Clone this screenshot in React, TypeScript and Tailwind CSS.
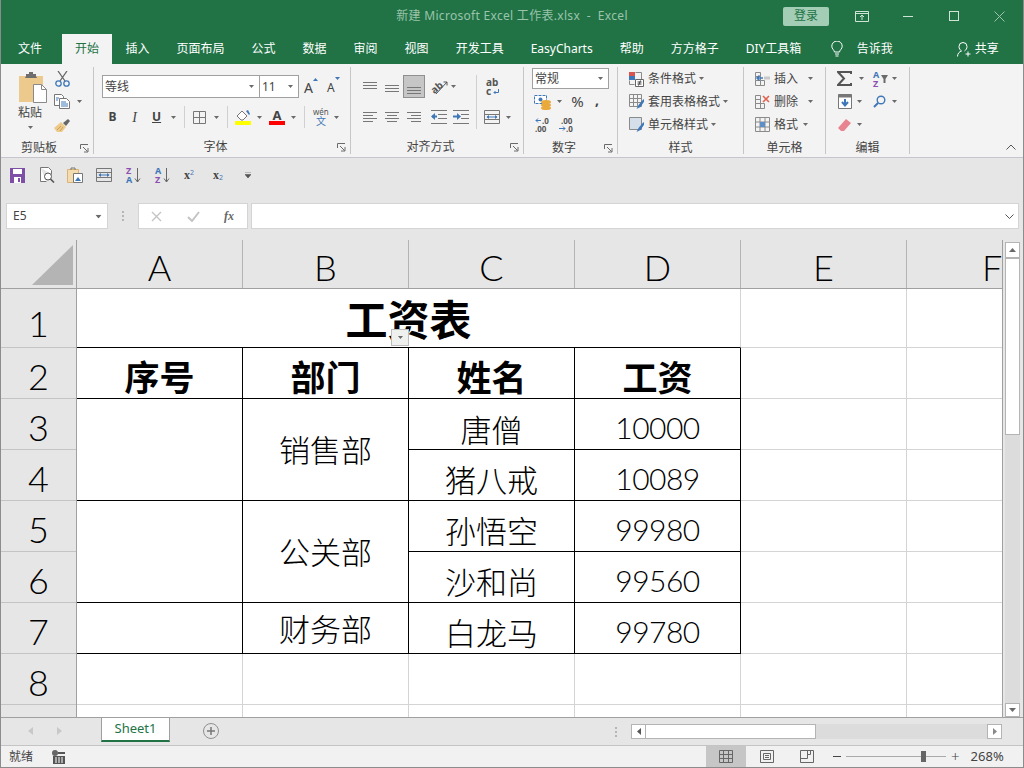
const Caret = ({ className = '' }: { className?: string }) => (
  <svg width="5" height="3" viewBox="0 0 5 3" className={`shrink-0 ${className}`}>
    <path d="M0 0h5L2.500 3z" fill="#6a6a6a" />
  </svg>
);

const Launcher = () => (
  <svg width="9" height="9" viewBox="0 0 9 9" className="shrink-0 mr-[4px] mt-[3px]">
    <path d="M.5 5V.5H8M3 3l4.500 4.500M8 4v4H4" fill="none" stroke="#6a6a6a" />
  </svg>
);

const Sep = ({ className = '' }: { className?: string }) => <div className={`w-px shrink-0 h-[22px] bg-[#d0d0d0] ${className}`} />;

function Lines({ rows, w = 14 }: { rows: [number, number, number][]; w?: number }) {
  return (
    <svg width={w} height="16" viewBox={`0 0 ${w} 16`} className="shrink-0">
      {rows.map(([x, y, l], i) => (
        <path key={i} d={`M${x} ${y + 0.5}h${l}`} stroke="#777" />
      ))}
    </svg>
  );
}

const SheetGridIcon = () => (
  <svg width="15" height="15" viewBox="0 0 15 15" className="shrink-0">
    <path d="M.5.500h14v14H.5zM.5 5h14M.5 10h14M5 .5v14M10 .5v14" fill="none" stroke="#8a8a8a" />
    <path d="M5 5h5v5H5z" fill="#5b8fc9" />
  </svg>
);

const Wrap = () => (
  <svg width="16" height="14" viewBox="0 0 16 14" className="shrink-0">
    <path d="M.5.500h15v13H.5zM.5 4.500h15M.5 9.500h15" fill="none" stroke="#777" />
    <path d="M3 7h10" stroke="#3f78b8" />
    <path d="M5 5v4L2.500 7zM11 5v4l2.500-2z" fill="#3f78b8" />
  </svg>
);

const SortIcon = ({ top, bottom, c1, c2 }: { top: string; bottom: string; c1: string; c2: string }) => (
  <svg width="15" height="16" viewBox="0 0 15 16" className="shrink-0 overflow-visible font-bold text-[9px]">
    <text x="0" y="7" fill={c1}>{top}</text>
    <text x="0" y="15.500" fill={c2}>{bottom}</text>
    <path d="M11.500 1v14M9 11.500l2.500 3.500 2.500-3.500" fill="none" stroke="#666" />
  </svg>
);

function Cell({ className = '', children }: { className?: string; children?: React.ReactNode }) {
  return <div className={`flex items-center justify-center border-r border-b ${className}`}>{children}</div>;
}

const rowNums: [string, string][] = [
  ['1', 'h-[59px] pt-[10px]'],
  ['2', 'h-[51px] pt-[5px]'],
  ['3', 'h-[51px] pt-[5px]'],
  ['4', 'h-[51px] pt-[5px]'],
  ['5', 'h-[51px] pt-[5px]'],
  ['6', 'h-[51px] pt-[5px]'],
  ['7', 'h-[51px] pt-[5px]'],
  ['8', 'h-[51px] pt-[5px]'],
];

const tabs = ['插入', '页面布局', '公式', '数据', '审阅', '视图', '开发工具', 'EasyCharts', '帮助', '方方格子', 'DIY工具箱'];

export default function App() {
  return (
    <div className="w-[1024px] h-[768px] overflow-hidden flex flex-col border-x border-b border-[#8c8c8c] bg-[#e6e6e6] text-[12px] text-[#444] font-['Noto_Sans','Noto_Sans_CJK_SC',sans-serif]">
      {/* title bar */}
      <div className="h-[32px] shrink-0 bg-[#217346] grid grid-cols-[1fr_auto_1fr] items-center">
        <div />
        <div className="text-[#9ac4ab] text-[12px] tracking-[0.3px] whitespace-pre">新建 Microsoft Excel 工作表.xlsx  -  Excel</div>
        <div className="flex items-center justify-end pr-[18px]">
          <div className="w-[46px] h-[19px] rounded-[2px] bg-[#a3cdb5] text-[#217346] flex items-center justify-center">登录</div>
          <svg width="14" height="11" viewBox="0 0 14 11" className="ml-[26px]">
            <path d="M.5.500h13v10H.5zM.5 2.500h13M7 9V4.500M5 6l2-2 2 2" fill="none" stroke="#cfe3d7" />
          </svg>
          <div className="ml-[34px] w-[10px] h-px bg-[#cfe3d7]" />
          <div className="ml-[36px] w-[10px] h-[10px] border border-[#cfe3d7]" />
          <svg width="11" height="11" viewBox="0 0 11 11" className="ml-[35px]">
            <path d="M.5.500l10 10M10.500.500l-10 10" stroke="#9ac4ab" />
          </svg>
        </div>
      </div>

      {/* tabs */}
      <div className="h-[32px] shrink-0 bg-[#217346] flex items-end pl-[4px] text-white">
        <div className="h-[30px] px-[13px] mr-[7px] flex items-center">文件</div>
        <div className="h-[30px] px-[13px] flex items-center bg-[#f3f3f3] text-[#217346]">开始</div>
        {tabs.map((t) => (
          <div key={t} className="h-[30px] px-[13.500px] flex items-center whitespace-nowrap">{t}</div>
        ))}
        <div className="h-[30px] flex items-center ml-[16px]">
          <svg width="12" height="16" viewBox="0 0 12 16">
            <path d="M3.500 11C3 8.500.8 8 .8 5.200a5.200 5.200 0 0 1 10.400 0C11.200 8 9 8.500 8.500 11zM4 13h4M4.500 15h3" fill="none" stroke="#fff" />
          </svg>
          <span className="ml-[14px]">告诉我</span>
        </div>
        <div className="h-[30px] flex items-center ml-[64px]">
          <svg width="15" height="16" viewBox="0 0 15 16">
            <path d="M.5 15.500c0-3 2-5 4-5.500-1.500-1-2.500-2.500-2.500-4.500a4 4 0 0 1 8 0c0 2-1 3.500-2.500 4.500M11 10.500v5M8.500 13h5" fill="none" stroke="#fff" />
          </svg>
          <span className="ml-[3px]">共享</span>
        </div>
      </div>

      {/* ribbon */}
      <div className="h-[94px] shrink-0 bg-[#f3f3f3] border-b border-[#c8c4cc] flex pt-[3px]">
        {/* clipboard */}
        <div className="w-[93px] h-[87px] shrink-0 border-r border-[#c6c6c6] flex flex-col">
          <div className="h-[69px] flex">
            <div className="w-[50px] pl-[17px] pt-[5px] flex flex-col items-start">
              <svg width="29" height="31" viewBox="0 0 29 31">
                <path d="M1 4h24v26H1z" fill="#ecc98c" />
                <path d="M8 4V2h3V0h4v2h3v2l1 2H7z" fill="#6e6e6e" />
                <path d="M15.500 12.500h8l5 5v13h-13z" fill="#fff" stroke="#8a8a8a" />
                <path d="M23.500 12.500v5h5" fill="none" stroke="#8a8a8a" />
              </svg>
              <span className="mt-[1px] leading-[17px]">粘贴</span>
              <Caret className="ml-[10px] mt-[5px]" />
            </div>
            <div className="flex flex-col">
              <div className="h-[23px] flex items-center pl-[4px]">
                <svg width="15" height="16" viewBox="0 0 15 16">
                  <path d="M3 0l7 10M12 0L5 10" stroke="#666" strokeWidth="1.300" />
                  <circle cx="3.500" cy="12.500" r="2.700" fill="none" stroke="#3f78b8" strokeWidth="1.300" />
                  <circle cx="11.500" cy="12.500" r="2.700" fill="none" stroke="#3f78b8" strokeWidth="1.300" />
                </svg>
              </div>
              <div className="h-[23px] flex items-center pl-[3px]">
                <svg width="16" height="15" viewBox="0 0 16 15">
                  <path d="M.5.500h7l2 2v9h-9z" fill="#fff" stroke="#777" />
                  <path d="M5.500 4.500h7l3 3v7h-10z" fill="#fff" stroke="#777" />
                  <path d="M7 8h5M7 10h7M7 12h7M2 4h3M2 6h2" stroke="#3f78b8" />
                </svg>
                <Caret className="ml-[7px]" />
              </div>
              <div className="h-[23px] flex items-center pl-[3px]">
                <svg width="16" height="14" viewBox="0 0 16 14">
                  <path d="M9 5l5-4 2 2-4 5z" fill="#666" />
                  <path d="M0 10l7-6 5 5-4 5H3z" fill="#edc98a" />
                  <path d="M3 12l4-4M6 13l3-4" stroke="#c9a263" />
                </svg>
              </div>
            </div>
          </div>
          <div className="flex flex-1 pt-[5px] leading-[14px]">
            <div className="flex-1 text-center pr-[3px]">剪贴板</div>
            <Launcher />
          </div>
        </div>

        {/* font */}
        <div className="w-[257px] h-[87px] shrink-0 border-r border-[#c6c6c6] flex flex-col">
          <div className="h-[69px] flex flex-col pt-[8px]">
            <div className="h-[23px] flex items-center">
              <div className="ml-[8px] w-[158px] h-[23px] bg-white border border-[#a0a0a0] flex items-center justify-between pl-[2px] pr-[5px]">
                <span>等线</span>
                <Caret />
              </div>
              <div className="-ml-px w-[40px] h-[23px] bg-white border border-[#a0a0a0] flex items-center justify-between pl-[2px] pr-[5px]">
                <span>11</span>
                <Caret />
              </div>
              <div className="ml-[5px] flex items-start w-[14px]">
                <span className="text-[14px] leading-[18px] mt-[2px]">A</span>
                <svg width="5" height="3" viewBox="0 0 5 3" className="mt-[1px]"><path d="M0 3h5L2.500 0z" fill="#3f78b8" /></svg>
              </div>
              <div className="ml-[9px] flex items-start w-[13px]">
                <span className="text-[12px] leading-[18px] mt-[3px]">A</span>
                <svg width="5" height="3" viewBox="0 0 5 3" className="mt-[1px]"><path d="M0 0h5L2.500 3z" fill="#3f78b8" /></svg>
              </div>
            </div>
            <div className="h-[22px] mt-[8px] flex items-center">
              <span className="ml-[14px] w-[9px] font-bold text-center">B</span>
              <span className="ml-[14px] w-[7px] italic text-center font-['Liberation_Serif',serif] text-[14px]">I</span>
              <span className="ml-[14px] w-[9px] font-bold text-center underline">U</span>
              <Caret className="ml-[10px]" />
              <Sep className="ml-[8px]" />
              <svg width="13" height="13" viewBox="0 0 13 13" className="ml-[8px]">
                <path d="M.5.500h12v12H.5zM6.500 0v13M0 6.500h13" fill="none" stroke="#777" />
              </svg>
              <Caret className="ml-[8px]" />
              <Sep className="ml-[8px]" />
              <div className="ml-[7px] w-[16px] flex flex-col">
                <svg width="16" height="11" viewBox="0 0 16 11">
                  <path d="M2 6l5-5 5 5-4 4H6z" fill="#fff" stroke="#777" />
                  <path d="M11 1l3 4 1-1-2-4z" fill="#3f78b8" />
                </svg>
                <div className="h-[4px] bg-[#ffff00]" />
              </div>
              <Caret className="ml-[6px]" />
              <div className="ml-[7px] w-[16px] flex flex-col items-center">
                <span className="leading-[11px] font-bold text-[13px]">A</span>
                <div className="h-[4px] w-full bg-[#ff0000]" />
              </div>
              <Caret className="ml-[6px]" />
              <Sep className="ml-[8px]" />
              <svg width="15" height="18" viewBox="0 0 15 18" className="ml-[8px] overflow-visible text-[8px]">
                <text x="0" y="7" fill="#555">wén</text>
                <text x="3" y="17" fill="#3f78b8" className="text-[10px]">文</text>
              </svg>
              <Caret className="ml-[6px]" />
            </div>
          </div>
          <div className="flex flex-1 pt-[5px] leading-[14px]">
            <div className="flex-1 text-center">字体</div>
            <Launcher />
          </div>
        </div>

        {/* alignment */}
        <div className="w-[173px] h-[87px] shrink-0 border-r border-[#c6c6c6] flex flex-col">
          <div className="h-[69px] flex pt-[8px]">
            <div className="flex flex-col w-[125px] shrink-0">
              <div className="h-[23px] flex items-center">
                <div className="ml-[12px]"><Lines rows={[[0, 3, 14], [0, 6, 14], [0, 9, 14]]} /></div>
                <div className="ml-[8px]"><Lines rows={[[0, 6, 14], [0, 9, 14], [0, 12, 14]]} /></div>
                <div className="ml-[4px] w-[22px] h-[23px] bg-[#c6c6c6] border border-[#8f8f8f] flex items-center justify-center">
                  <Lines rows={[[0, 8, 14], [0, 11, 14], [0, 14, 14]]} />
                </div>
                <svg width="17" height="17" viewBox="0 0 17 17" className="ml-[6px] overflow-visible text-[10px] font-bold">
                  <text x="0" y="13" fill="#555" transform="rotate(-40 6 10)">ab</text>
                  <path d="M5 16L16 4M12.500 4H16v3.500" fill="none" stroke="#555" />
                </svg>
                <Caret className="ml-[3px]" />
              </div>
              <div className="h-[22px] mt-[8px] flex items-center">
                <div className="ml-[12px]"><Lines rows={[[0, 3, 14], [0, 6, 10], [0, 9, 14], [0, 12, 10]]} /></div>
                <div className="ml-[8px]"><Lines rows={[[0, 3, 14], [2, 6, 10], [0, 9, 14], [2, 12, 10]]} /></div>
                <div className="ml-[8px]"><Lines rows={[[0, 3, 14], [4, 6, 10], [0, 9, 14], [4, 12, 10]]} /></div>
                <svg width="16" height="14" viewBox="0 0 16 14" className="ml-[10px]">
                  <path d="M0 .500h16M7 4.500h9M7 8.500h9M0 13.500h16" stroke="#777" />
                  <path d="M1 6.500h5" stroke="#3f78b8" strokeWidth="2" />
                  <path d="M4 3v7L0 6.500z" fill="#3f78b8" />
                </svg>
                <svg width="16" height="14" viewBox="0 0 16 14" className="ml-[6px]">
                  <path d="M0 .500h16M8 4.500h8M8 8.500h8M0 13.500h16" stroke="#777" />
                  <path d="M0 6.500h5" stroke="#3f78b8" strokeWidth="2" />
                  <path d="M4 3v7l4-3.500z" fill="#3f78b8" />
                </svg>
              </div>
            </div>
            <div className="w-px h-[54px] bg-[#d0d0d0] shrink-0" />
            <div className="flex flex-col">
              <svg width="14" height="18" viewBox="0 0 14 18" className="ml-[9px] mt-[3px] mb-[2px] overflow-visible text-[10px] font-bold">
                <text x="0" y="8" fill="#555">ab</text>
                <text x="0" y="16.500" fill="#555">c</text>
                <path d="M12.500 11v3.500H8M9.500 13L8 14.500 9.500 16" fill="none" stroke="#3f78b8" />
              </svg>
              <div className="h-[22px] mt-[8px] flex items-center ml-[7px]">
                <Wrap />
                <Caret className="ml-[6px]" />
              </div>
            </div>
          </div>
          <div className="flex flex-1 pt-[5px] leading-[14px]">
            <div className="flex-1 text-center">对齐方式</div>
            <Launcher />
          </div>
        </div>

        {/* number */}
        <div className="w-[94px] h-[87px] shrink-0 border-r border-[#c6c6c6] flex flex-col">
          <div className="h-[69px] flex flex-col">
            <div className="h-[23px] flex items-center">
              <div className="ml-[8px] w-[77px] h-[21px] bg-white border border-[#a0a0a0] flex items-center justify-between pl-[2px] pr-[5px]">
                <span>常规</span>
                <Caret />
              </div>
            </div>
            <div className="h-[23px] flex items-center">
              <svg width="18" height="16" viewBox="0 0 18 16" className="ml-[10px]">
                <path d="M.5 1.500h12v8H.5z" fill="#fff" stroke="#3f78b8" strokeDasharray="3 1" />
                <circle cx="6.500" cy="5.500" r="2" fill="#3f78b8" />
                <ellipse cx="12" cy="8" rx="5" ry="2" fill="#e9a93b" />
                <ellipse cx="12" cy="11" rx="5" ry="2" fill="#e9a93b" />
                <ellipse cx="12" cy="14" rx="5" ry="2" fill="#e9a93b" />
              </svg>
              <Caret className="ml-[5px]" />
              <span className="ml-[9px] text-[15px] w-[13px] text-center leading-none">%</span>
              <span className="ml-[11px] font-bold text-[14px] leading-none -mt-[4px]">,</span>
            </div>
            <div className="h-[23px] flex items-center">
              <svg width="16" height="16" viewBox="0 0 16 16" className="ml-[11px] overflow-visible text-[8px] font-bold">
                <path d="M6 3.500H1M3 1.500l-2 2 2 2" fill="none" stroke="#3f78b8" />
                <text x="7" y="7" fill="#555">.0</text>
                <text x="0" y="15" fill="#555">.00</text>
              </svg>
              <svg width="15" height="16" viewBox="0 0 15 16" className="ml-[8px] overflow-visible text-[8px] font-bold">
                <text x="2" y="7" fill="#555">.00</text>
                <path d="M0 11.500h6M4 9.500l2 2-2 2" fill="none" stroke="#3f78b8" />
                <text x="7" y="15" fill="#555">.0</text>
              </svg>
            </div>
          </div>
          <div className="flex flex-1 pt-[5px] leading-[14px]">
            <div className="flex-1 text-center">数字</div>
            <Launcher />
          </div>
        </div>

        {/* styles */}
        <div className="w-[126px] h-[87px] shrink-0 border-r border-[#c6c6c6] flex flex-col">
          <div className="h-[69px] flex flex-col">
            <div className="h-[23px] flex items-center pl-[11px]">
              <svg width="15" height="16" viewBox="0 0 15 16">
                <path d="M0 1h6v4H0z" fill="#d9534f" />
                <path d="M0 5h6v4H0z" fill="#3f78b8" />
                <path d="M6.500 1.500h6v7M.500 9.500v4h5" fill="none" stroke="#8a8a8a" />
                <path d="M6.500 8.500h8v7h-8z" fill="#fff" stroke="#666" />
                <path d="M8.500 11h4M8.500 13h4M11.500 9.500l-2 5" stroke="#444" />
              </svg>
              <span className="ml-[4px]">条件格式</span>
              <Caret className="ml-[3px]" />
            </div>
            <div className="h-[23px] flex items-center pl-[11px]">
              <svg width="15" height="16" viewBox="0 0 15 16">
                <path d="M.5.500h12v12H.5zM.5 4.500h12M.5 8.500h12M4.500.500v12M8.500.500v12" fill="none" stroke="#8a8a8a" />
                <path d="M14.500 5l-5 6-2 4 4-2 4-6z" fill="#3f78b8" />
              </svg>
              <span className="ml-[4px]">套用表格格式</span>
              <Caret className="ml-[3px]" />
            </div>
            <div className="h-[23px] flex items-center pl-[11px]">
              <svg width="15" height="16" viewBox="0 0 15 16">
                <path d="M.5.500h12v12H.5z" fill="#d5dfea" stroke="#8a8a8a" />
                <path d="M14.500 5l-5 6-2 4 4-2 4-6z" fill="#3f78b8" />
              </svg>
              <span className="ml-[4px]">单元格样式</span>
              <Caret className="ml-[3px]" />
            </div>
          </div>
          <div className="flex-1 pt-[5px] leading-[14px] text-center">样式</div>
        </div>

        {/* cells */}
        <div className="w-[82px] h-[87px] shrink-0 border-r border-[#c6c6c6] flex flex-col">
          <div className="h-[69px] flex flex-col">
            <div className="h-[23px] flex items-center pl-[11px]">
              <svg width="15" height="14" viewBox="0 0 15 14">
                <path d="M.5.500h5v4h-5zM.5 4.500h5v4h-5zM.5 8.500h5v5h-5zM5.500 8.500h4v5h-4z" fill="none" stroke="#8a8a8a" />
                <path d="M9 4.500h6v3H9z" fill="#c9c9c9" />
                <path d="M8 6H2M4.500 3.500L2 6l2.500 2.500" fill="none" stroke="#3f78b8" strokeWidth="1.500" />
              </svg>
              <span className="ml-[4px]">插入</span>
              <Caret className="ml-[10px]" />
            </div>
            <div className="h-[23px] flex items-center pl-[11px]">
              <svg width="15" height="15" viewBox="0 0 15 15">
                <path d="M.5 1.500h5v4h-5zM.5 5.500h5v4h-5zM.5 9.500h5v5h-5zM5.500 9.500h4v5h-4z" fill="none" stroke="#8a8a8a" />
                <path d="M8 2l6 6M14 2L8 8" stroke="#e0634f" strokeWidth="1.600" />
              </svg>
              <span className="ml-[4px]">删除</span>
              <Caret className="ml-[10px]" />
            </div>
            <div className="h-[23px] flex items-center pl-[11px]">
              <SheetGridIcon />
              <span className="ml-[4px]">格式</span>
              <Caret className="ml-[5px]" />
            </div>
          </div>
          <div className="flex-1 pt-[5px] leading-[14px] text-center">单元格</div>
        </div>

        {/* editing */}
        <div className="w-[84px] h-[87px] shrink-0 border-r border-[#c6c6c6] flex flex-col">
          <div className="h-[69px] flex flex-col">
            <div className="h-[23px] flex items-center">
              <svg width="15" height="15" viewBox="0 0 15 15" className="ml-[11px]">
                <path d="M14 3V1H1l6 6.500L1 14h13v-2" fill="none" stroke="#555" strokeWidth="2" />
              </svg>
              <Caret className="ml-[7px]" />
              <svg width="8" height="17" viewBox="0 0 8 17" className="ml-[9px] overflow-visible text-[9px] font-bold">
                <text x="0" y="8" fill="#3f78b8">A</text>
                <text x="0" y="16.500" fill="#8a4fb0">Z</text>
              </svg>
              <svg width="9" height="8" viewBox="0 0 9 8" className="mt-[1px]">
                <path d="M0 0h7L4.500 4v4h-2V4z" fill="#6a6a6a" />
              </svg>
              <Caret className="ml-[2px]" />
            </div>
            <div className="h-[23px] flex items-center">
              <svg width="14" height="15" viewBox="0 0 14 15" className="ml-[12px]">
                <path d="M.5.500h13v14H.5z" fill="#fff" stroke="#777" />
                <path d="M.5.500h13v3H.5z" fill="#777" />
                <path d="M7 5v6M4 8l3 3.500L10 8" fill="none" stroke="#3f78b8" strokeWidth="2" />
              </svg>
              <Caret className="ml-[5px]" />
              <svg width="13" height="13" viewBox="0 0 13 13" className="ml-[11px]">
                <circle cx="8" cy="5" r="3.800" fill="none" stroke="#3f78b8" strokeWidth="1.400" />
                <path d="M5 8l-4 4" stroke="#3f78b8" strokeWidth="2" />
              </svg>
              <Caret className="ml-[6px]" />
            </div>
            <div className="h-[23px] flex items-center">
              <svg width="13" height="12" viewBox="0 0 13 12" className="ml-[12px]">
                <path d="M8 0l5 4-7 8H3l-3-3z" fill="#e8848f" />
              </svg>
              <Caret className="ml-[6px]" />
            </div>
          </div>
          <div className="flex-1 pt-[5px] leading-[14px] text-center">编辑</div>
        </div>

        <div className="flex-1 flex items-end justify-end pr-[7px] pb-[4px] h-[87px]">
          <svg width="10" height="6" viewBox="0 0 10 6"><path d="M.5 5.500L5 1l4.500 4.500" fill="none" stroke="#555" /></svg>
        </div>
      </div>

      {/* quick access */}
      <div className="h-[34px] shrink-0 flex items-center pl-[9px]">
        <svg width="15" height="15" viewBox="0 0 15 15">
          <path d="M0 0h15v15H0z" fill="#7f4fa8" />
          <path d="M3 1h9v5H3z" fill="#fff" />
          <path d="M4 9h7v6H4z" fill="#fff" />
          <path d="M8 10h2v4H8z" fill="#7f4fa8" />
        </svg>
        <svg width="15" height="16" viewBox="0 0 15 16" className="ml-[15px]">
          <path d="M.5.500h8l3 3v4M.5.500v14h6" fill="#fff" stroke="#777" />
          <circle cx="8" cy="9.500" r="3.500" fill="#fff" stroke="#555" />
          <path d="M10.500 12l3.500 3.500" stroke="#555" strokeWidth="1.600" />
        </svg>
        <svg width="16" height="16" viewBox="0 0 16 16" className="ml-[12px]">
          <path d="M.5 2.500h11v13H.5z" fill="#f4dcae" stroke="#d9b473" />
          <path d="M4 3V1h4v2" fill="none" stroke="#777" />
          <path d="M6.500 6.500h9v9h-9z" fill="#fff" stroke="#777" />
          <path d="M8 14l3-4 3 4z" fill="#3f78b8" />
        </svg>
        <div className="ml-[13px]"><Wrap /></div>
        <div className="ml-[14px]"><SortIcon top="Z" bottom="A" c1="#8a4fb0" c2="#3f78b8" /></div>
        <div className="ml-[14px]"><SortIcon top="A" bottom="Z" c1="#3f78b8" c2="#8a4fb0" /></div>
        <div className="ml-[14px] w-[13px] flex items-start font-['Liberation_Serif',serif] font-bold text-[12px] leading-[12px]">
          x<span className="text-[7px] leading-[7px] text-[#3f78b8] font-['Noto_Sans',sans-serif] font-normal">2</span>
        </div>
        <div className="ml-[16px] w-[13px] flex items-end font-['Liberation_Serif',serif] font-bold text-[12px] leading-[12px]">
          x<span className="text-[7px] leading-[7px] text-[#3f78b8] font-['Noto_Sans',sans-serif] font-normal">2</span>
        </div>
        <svg width="6" height="6" viewBox="0 0 6 6" className="ml-[19px]">
          <path d="M0 0h6M0 2.500h6L3 6z" fill="#555" stroke="#555" strokeWidth=".6" />
        </svg>
      </div>

      {/* formula bar */}
      <div className="h-[48px] shrink-0 flex items-start pt-[11px] pl-[5px]">
        <div className="w-[102px] h-[26px] bg-white border border-[#d4d4d4] flex items-center justify-between pl-[6px] pr-[6px]">
          <span>E5</span>
          <Caret className="scale-125" />
        </div>
        <div className="w-[30px] h-[26px] shrink-0 flex flex-col items-center justify-center gap-[2px]">
          <div className="w-[2px] h-[2px] bg-[#b5b5b5]" />
          <div className="w-[2px] h-[2px] bg-[#b5b5b5]" />
          <div className="w-[2px] h-[2px] bg-[#b5b5b5]" />
        </div>
        <div className="w-[110px] h-[26px] bg-white border border-[#d4d4d4] flex items-center pl-[12px]">
          <svg width="11" height="11" viewBox="0 0 11 11"><path d="M1 1l9 9M10 1l-9 9" stroke="#c4c4c4" strokeWidth="1.400" /></svg>
          <svg width="13" height="11" viewBox="0 0 13 11" className="ml-[25px]"><path d="M1 6l4 4 7-9" fill="none" stroke="#c4c4c4" strokeWidth="2" /></svg>
          <span className="ml-[24px] font-['Liberation_Serif',serif] italic font-bold text-[12px] text-[#666]">fx</span>
        </div>
        <div className="ml-[3px] w-[768px] h-[26px] bg-white border border-[#d4d4d4] flex items-center justify-end pr-[4px]">
          <svg width="9" height="5" viewBox="0 0 9 5"><path d="M.5.500l4 4 4-4" fill="none" stroke="#555" /></svg>
        </div>
      </div>

      {/* sheet */}
      <div className="h-[477px] shrink-0 flex">
        <div className="w-[1002px] shrink-0 flex flex-col border-r border-[#a0a0a0] font-['Lato','Noto_Sans_CJK_SC',sans-serif] text-black">
          <div className="h-[49px] shrink-0 flex border-b border-[#a0a0a0] text-[36px] leading-none font-light">
            <div className="w-[76px] shrink-0 border-r border-[#a0a0a0] flex items-end justify-end pr-[3px] pb-[3px]">
              <svg width="41" height="40" viewBox="0 0 41 40"><path d="M41 0v40H0z" fill="#b4b4b4" /></svg>
            </div>
            {['A', 'B', 'C', 'D', 'E'].map((c) => (
              <div key={c} className="w-[166px] shrink-0 border-r border-[#b4b4b4] flex items-center justify-center pt-[6px]">{c}</div>
            ))}
            <div className="flex-1 overflow-hidden flex items-center pl-[75px] pt-[6px]">F</div>
          </div>
          <div className="flex-1 flex min-h-0">
            <div className="w-[76px] shrink-0 border-r border-[#a0a0a0] flex flex-col text-[36px] leading-none font-light">
              {rowNums.map(([n, h]) => (
                <div key={n} className={`${h} shrink-0 border-b border-[#c4c4c4] flex items-center justify-center`}>{n}</div>
              ))}
            </div>
            <div className="flex-1 grid grid-cols-[166px_166px_166px_166px_166px_95px] grid-rows-[59px_51px_51px_51px_51px_51px_51px_51px_12px] bg-white text-[31px] font-light font-['Noto_Sans_CJK_SC',sans-serif]">
              <Cell className="col-span-4 relative border-r-[#d4d4d4] border-b-black text-[42px] font-bold pb-[1px] leading-none">
                工资表
                <div className="absolute left-[314px] bottom-[1px] w-[18px] h-[17px] bg-[#eef1ee] border border-[#bcbcbc] flex items-center justify-center">
                  <Caret />
                </div>
              </Cell>
              <Cell className="border-[#d4d4d4]" />
              <Cell className="border-b-[#d4d4d4] border-r-0" />

              <Cell className="border-black text-[35px] font-bold pt-[5px] leading-none">序号</Cell>
              <Cell className="border-black text-[35px] font-bold pt-[5px] leading-none">部门</Cell>
              <Cell className="border-black text-[35px] font-bold pt-[5px] leading-none">姓名</Cell>
              <Cell className="border-black text-[35px] font-bold pt-[5px] leading-none">工资</Cell>
              <Cell className="border-[#d4d4d4]" />
              <Cell className="border-b-[#d4d4d4] border-r-0" />

              <Cell className="row-span-2 border-black" />
              <Cell className="row-span-2 border-black pb-[3px] leading-none">销售部</Cell>
              <Cell className="border-black pt-[8px] leading-none">唐僧</Cell>
              <Cell className="border-black pt-[6px] leading-none text-[30px] font-['Lato',sans-serif] tracking-[-0.5px]">10000</Cell>
              <Cell className="border-[#d4d4d4]" />
              <Cell className="border-b-[#d4d4d4] border-r-0" />

              <Cell className="border-black pt-[7px] leading-none">猪八戒</Cell>
              <Cell className="border-black pt-[6px] leading-none text-[30px] font-['Lato',sans-serif] tracking-[-0.5px]">10089</Cell>
              <Cell className="border-[#d4d4d4]" />
              <Cell className="border-b-[#d4d4d4] border-r-0" />

              <Cell className="row-span-2 border-black" />
              <Cell className="row-span-2 border-black pb-[3px] leading-none">公关部</Cell>
              <Cell className="border-black pt-[7px] leading-none">孙悟空</Cell>
              <Cell className="border-black pt-[6px] leading-none text-[30px] font-['Lato',sans-serif] tracking-[-0.5px]">99980</Cell>
              <Cell className="border-[#d4d4d4]" />
              <Cell className="border-b-[#d4d4d4] border-r-0" />

              <Cell className="border-black pt-[7px] leading-none">沙和尚</Cell>
              <Cell className="border-black pt-[6px] leading-none text-[30px] font-['Lato',sans-serif] tracking-[-0.5px]">99560</Cell>
              <Cell className="border-[#d4d4d4]" />
              <Cell className="border-b-[#d4d4d4] border-r-0" />

              <Cell className="border-black" />
              <Cell className="border-black pb-[1px] leading-none">财务部</Cell>
              <Cell className="border-black pt-[6px] leading-none">白龙马</Cell>
              <Cell className="border-black pt-[6px] leading-none text-[30px] font-['Lato',sans-serif] tracking-[-0.5px]">99780</Cell>
              <Cell className="border-[#d4d4d4]" />
              <Cell className="border-b-[#d4d4d4] border-r-0" />

              {[0, 1, 2, 3, 4].map((i) => <Cell key={i} className="border-[#d4d4d4]" />)}
              <Cell className="border-b-[#d4d4d4] border-r-0" />
              {[0, 1, 2, 3, 4].map((i) => <div key={i} className="border-r border-[#d4d4d4]" />)}
              <div />
            </div>
          </div>
        </div>

        {/* vertical scrollbar */}
        <div className="flex-1 flex flex-col pl-[2px] pr-[3px] pt-[2px]">
          <div className="h-[16px] w-[15px] shrink-0 bg-white border border-[#b4b4b4] flex items-center justify-center">
            <svg width="7" height="4" viewBox="0 0 7 4"><path d="M0 4h7L3.500 0z" fill="#6a6a6a" /></svg>
          </div>
          <div className="h-[177px] w-[15px] shrink-0 bg-white border border-[#b4b4b4]" />
          <div className="flex-1 w-[15px] bg-[#dcdcdc]" />
          <div className="h-[14px] w-[15px] shrink-0 bg-white border border-[#b4b4b4] flex items-center justify-center">
            <svg width="7" height="4" viewBox="0 0 7 4"><path d="M0 0h7L3.500 4z" fill="#6a6a6a" /></svg>
          </div>
        </div>
      </div>

      {/* sheet tabs */}
      <div className="h-[28px] shrink-0 border-t border-[#a0a0a0] flex items-start">
        <svg width="5" height="8" viewBox="0 0 5 8" className="ml-[27px] mt-[9px]"><path d="M5 0v8L0 4z" fill="#c8c8c8" /></svg>
        <svg width="5" height="8" viewBox="0 0 5 8" className="ml-[24px] mt-[9px]"><path d="M0 0v8l5-4z" fill="#c8c8c8" /></svg>
        <div className="ml-[39px] w-[69px] h-[24px] bg-white border-x border-[#a0a0a0] border-b-2 border-b-[#217346] text-[#217346] text-[13px] flex items-center justify-center">Sheet1</div>
        <svg width="16" height="16" viewBox="0 0 16 16" className="ml-[33px] mt-[5px]">
          <circle cx="8" cy="8" r="7.500" fill="none" stroke="#8f8f8f" />
          <path d="M8 4v8M4 8h8" stroke="#777" strokeWidth="1.500" />
        </svg>
        <div className="ml-[396px] mt-[9px] flex flex-col gap-[2px]">
          <div className="w-[2px] h-[2px] bg-[#b5b5b5]" />
          <div className="w-[2px] h-[2px] bg-[#b5b5b5]" />
          <div className="w-[2px] h-[2px] bg-[#b5b5b5]" />
        </div>
        <div className="ml-[14px] mt-[6px] flex h-[15px] w-[371px]">
          <div className="w-[15px] bg-white border border-[#b4b4b4] flex items-center justify-center">
            <svg width="4" height="7" viewBox="0 0 4 7"><path d="M4 0v7L0 3.500z" fill="#555" /></svg>
          </div>
          <div className="w-[170px] bg-white border-y border-r border-[#b4b4b4]" />
          <div className="flex-1 bg-[#dcdcdc]" />
          <div className="w-[15px] bg-white border border-[#b4b4b4] flex items-center justify-center">
            <svg width="4" height="7" viewBox="0 0 4 7"><path d="M0 0v7l4-3.500z" fill="#8a8a8a" /></svg>
          </div>
        </div>
      </div>

      {/* status bar */}
      <div className="flex-1 min-h-0 bg-[#f1f1f1] border-t border-[#c4c4c4] flex items-center">
        <span className="ml-[8px]">就绪</span>
        <svg width="13" height="14" viewBox="0 0 13 14" className="ml-[19px]">
          <circle cx="3" cy="3" r="3" fill="#666" />
          <path d="M6 2h7v2H6zM1 6h12v8H1z" fill="#555" />
          <path d="M3 8h2M6 8h2M9 8h2M3 10h2M6 10h2M9 10h2M3 12h2M6 12h2M9 12h2" stroke="#fff" />
        </svg>
        <div className="ml-[641px] w-[40px] h-full bg-[#c6c6c6] flex items-center justify-center">
          <svg width="14" height="13" viewBox="0 0 14 13"><path d="M.5.500h13v12H.5zM.5 4.500h13M.5 8.500h13M4.500.500v12M9.500.500v12" fill="none" stroke="#666" /></svg>
        </div>
        <svg width="14" height="13" viewBox="0 0 14 13" className="ml-[14px]"><path d="M.5.500h13v12H.5zM3.500 3.500h7v6h-7zM5 5.500h4M5 7.500h4" fill="none" stroke="#666" /></svg>
        <svg width="14" height="13" viewBox="0 0 14 13" className="ml-[26px]"><path d="M.5.500h13v12H.5zM.5 8.500h7V.500M7.500 4.500h3V.500" fill="none" stroke="#666" /></svg>
        <div className="ml-[19px] w-[8px] h-px bg-[#444]" />
        <div className="ml-[5px] w-[100px] flex items-center">
          <div className="w-[75px] h-px bg-[#aaa]" />
          <div className="w-[5px] h-[11px] bg-[#666]" />
          <div className="flex-1 h-px bg-[#aaa]" />
        </div>
        <div className="ml-[5px] text-[15px] leading-none font-light">+</div>
        <span className="ml-[11px] text-[13px]">268%</span>
      </div>
    </div>
  );
}
